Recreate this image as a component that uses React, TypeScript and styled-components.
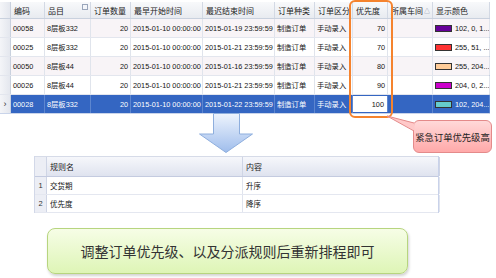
import styled, { createGlobalStyle } from 'styled-components';

const GlobalStyle = createGlobalStyle`
  body {
    margin: 0;
    background: #fff;
    font-family: "Liberation Sans", "Noto Sans CJK SC", sans-serif;
  }
`;

type RowKind = 'odd' | 'even' | 'sel';

type Order = {
  code: string;
  item: string;
  qty: number;
  start: string;
  end: string;
  priority: number;
  color: string;
  colorText: string;
};

const orders: Order[] = [
  { code: '00058', item: '8层板332', qty: 20, start: '2015-01-10 00:00:00', end: '2015-01-19 23:59:59', priority: 70, color: '#660099', colorText: '102, 0, 1...' },
  { code: '00025', item: '8层板332', qty: 20, start: '2015-01-10 00:00:00', end: '2015-01-21 23:59:59', priority: 70, color: '#ff3333', colorText: '255, 51, ...' },
  { code: '00050', item: '8层板44', qty: 20, start: '2015-01-10 00:00:00', end: '2015-01-16 23:59:59', priority: 80, color: '#ffcc99', colorText: '255, 204...' },
  { code: '00026', item: '8层板44', qty: 20, start: '2015-01-10 00:00:00', end: '2015-01-21 23:59:59', priority: 90, color: '#cc00cc', colorText: '204, 0, 2...' },
  { code: '00028', item: '8层板332', qty: 20, start: '2015-01-10 00:00:00', end: '2015-01-22 23:59:59', priority: 100, color: '#66cccc', colorText: '102, 204...' },
];

const headers = ['编码', '品目', '订单数量', '最早开始时间', '最迟结束时间', '订单种类', '订单区分', '优先度', '所属车间', '显示颜色'];

const rules = [
  { name: '交货期', value: '升序' },
  { name: '优先度', value: '降序' },
];

const App = () => {
  return (
    <>
      <GlobalStyle />
      <StPage>
        <StOrderGrid>
          <StHeadRow>
            <StRowHead />
            {headers.map((h) => (
              <StHeadCell key={h}>
                {h}
                {h === '品目' && <StFilterIcon />}
                {h === '所属车间' && <StSortMark>△</StSortMark>}
              </StHeadCell>
            ))}
          </StHeadRow>
          {orders.map((o, i) => {
            const kind: RowKind = i === orders.length - 1 ? 'sel' : i % 2 === 0 ? 'odd' : 'even';
            return (
              <StRow key={o.code} $kind={kind}>
                <StRowHead>{kind === 'sel' ? '›' : ''}</StRowHead>
                <StCell $kind={kind}>{o.code}</StCell>
                <StCell $kind={kind}>{o.item}</StCell>
                <StCell $kind={kind} $right>{o.qty}</StCell>
                <StCell $kind={kind}>{o.start}</StCell>
                <StCell $kind={kind}>{o.end}</StCell>
                <StCell $kind={kind}>制造订单</StCell>
                <StCell $kind={kind}>手动录入</StCell>
                <StCell $kind={kind} $right $edit={kind === 'sel'}>{o.priority}</StCell>
                <StCell $kind={kind} />
                <StCell $kind={kind}>
                  <StSwatch $color={o.color} />
                  {o.colorText}
                </StCell>
              </StRow>
            );
          })}
        </StOrderGrid>

        <StHighlight />

        <StMidBand>
          <StArrow viewBox="0 0 54 42" width="54" height="42">
            <defs>
              <linearGradient id="arrowFill" x1="0" y1="0" x2="0" y2="1">
                <stop offset="0" stopColor="#eef4fd" />
                <stop offset="1" stopColor="#9fbdec" />
              </linearGradient>
            </defs>
            <path
              d="M14.5 0.5 H40.5 V21 H53.5 L27 39.5 L0.5 21 H14.5 Z"
              fill="url(#arrowFill)"
              stroke="#8eaedd"
              strokeWidth="1"
            />
          </StArrow>
          <StCallout>
            <StPointer viewBox="0 0 30 20" width="30" height="20">
              <polygon points="1,1 28.5,8 28.5,16" fill="#ffc9c9" />
              <polyline points="28,8 1,1 28,16" fill="none" stroke="#e48a8a" strokeWidth="1" />
            </StPointer>
            紧急订单优先级高
          </StCallout>
        </StMidBand>

        <StRuleGrid>
          <StRuleHeadRow>
            <StRuleRowHead />
            <StRuleHeadCell>规则名</StRuleHeadCell>
            <StRuleHeadCell>内容</StRuleHeadCell>
          </StRuleHeadRow>
          {rules.map((r, i) => (
            <StRuleRow key={r.name}>
              <StRuleRowHead>{i + 1}</StRuleRowHead>
              <StRuleCell>{r.name}</StRuleCell>
              <StRuleCell>{r.value}</StRuleCell>
            </StRuleRow>
          ))}
        </StRuleGrid>

        <StNote>调整订单优先级、以及分派规则后重新排程即可</StNote>
      </StPage>
    </>
  );
};

const orderCols = '11px 34px 46px 40px 72px 72px 40px 38px 35px 45px 57px';
const ruleCols = '12px 196px 197px';

const StPage = styled.div`
  position: relative;
  width: 496px;
  height: 278px;
  overflow: hidden;
  padding-top: 2px;
  box-sizing: border-box;
`;

const StOrderGrid = styled.div`
  width: 490px;
  box-sizing: border-box;
  border-right: 1px solid #c5cfe1;
  font-size: 7.3px;
  color: #141414;
`;

const StHeadRow = styled.div`
  display: grid;
  grid-template-columns: ${orderCols};
  height: 17px;
  background: linear-gradient(#f8f9fb, #e8ebf0);
  border-bottom: 1px solid #c9d1de;
  box-sizing: border-box;
`;

const StHeadCell = styled.div`
  position: relative;
  display: flex;
  align-items: center;
  padding: 0 2px 0 3px;
  border-right: 1px solid #d3d9e4;
  font-size: 8px;
  color: #222;
  white-space: nowrap;
  overflow: hidden;
`;

const StFilterIcon = styled.span`
  position: absolute;
  right: 2px;
  top: 2px;
  width: 4px;
  height: 4px;
  border: 1px solid #9aa6bb;
  background: #f4f6fa;
`;

const StSortMark = styled.span`
  margin-left: auto;
  font-size: 6px;
  color: #7d8aa3;
`;

const StRow = styled.div<{ $kind: RowKind }>`
  display: grid;
  grid-template-columns: ${orderCols};
  height: 19px;
  box-sizing: border-box;
  border-bottom: 1px solid ${(p) => (p.$kind === 'sel' ? '#c9d4ea' : '#e3e6ee')};
  background: ${(p) => (p.$kind === 'sel' ? '#3466c2' : p.$kind === 'odd' ? '#f8f4f7' : '#ffffff')};
`;

const StRowHead = styled.div`
  display: flex;
  align-items: center;
  justify-content: center;
  background: linear-gradient(90deg, #f4f5f8, #e4e7ee);
  border-right: 1px solid #c9d1de;
  font-size: 9px;
  color: #333;
`;

const StCell = styled.div<{ $kind: RowKind; $right?: boolean; $edit?: boolean }>`
  display: flex;
  align-items: center;
  justify-content: ${(p) => (p.$right ? 'flex-end' : 'flex-start')};
  padding: 0 2px;
  border-right: 1px solid ${(p) => (p.$kind === 'sel' ? '#5d86cf' : '#e0e4ec')};
  white-space: nowrap;
  overflow: hidden;
  color: ${(p) => (p.$kind === 'sel' && !p.$edit ? '#ffffff' : '#141414')};
  background: ${(p) => (p.$edit ? '#ffffff' : 'transparent')};
  ${(p) => (p.$edit ? 'margin: 1px 0; padding-right: 3px;' : '')}
`;

const StSwatch = styled.span<{ $color: string }>`
  flex-shrink: 0;
  width: 15px;
  height: 5px;
  margin-right: 3px;
  border: 1px solid #333;
  background: ${(p) => p.$color};
`;

const StHighlight = styled.div`
  position: absolute;
  left: 349px;
  top: 0;
  width: 44px;
  height: 118px;
  box-sizing: border-box;
  border: 2px solid #f5832e;
  border-radius: 6px;
`;

const StMidBand = styled.div`
  display: flex;
  align-items: flex-start;
  height: 42px;
  padding-left: 199px;
`;

const StArrow = styled.svg`
  flex-shrink: 0;
  margin-top: -1px;
`;

const StCallout = styled.div`
  position: relative;
  margin-left: 160px;
  margin-top: 6px;
  width: 79px;
  height: 33px;
  box-sizing: border-box;
  display: flex;
  align-items: center;
  justify-content: center;
  border: 1px solid #e48a8a;
  border-radius: 6px;
  background: linear-gradient(#ffd9d9, #ffa9a9);
  font-family: "Noto Sans CJK SC", sans-serif;
  font-size: 9.3px;
  color: #222;
  white-space: nowrap;
`;

const StPointer = styled.svg`
  position: absolute;
  left: -28px;
  top: -6px;
`;

const StRuleGrid = styled.div`
  width: 405px;
  margin-left: 34px;
  box-sizing: border-box;
  border-left: 1px solid #d2d8e8;
  border-right: 1px solid #c9d2ea;
  font-size: 7.5px;
  color: #141414;
`;

const StRuleHeadRow = styled.div`
  display: grid;
  grid-template-columns: ${ruleCols};
  height: 21px;
  box-sizing: border-box;
  border-top: 1px solid #d6dbe8;
  border-bottom: 1px solid #c4cbe0;
  background: linear-gradient(#f6f7fb, #dfe3ef);
`;

const StRuleHeadCell = styled.div`
  display: flex;
  align-items: center;
  padding: 0 3px;
  border-right: 1px solid #cfd5e5;
  font-size: 8px;
  color: #222;
`;

const StRuleRow = styled.div`
  display: grid;
  grid-template-columns: ${ruleCols};
  height: 18px;
  box-sizing: border-box;
  border-bottom: 1px solid #e4e7f0;
`;

const StRuleRowHead = styled.div`
  display: flex;
  align-items: center;
  justify-content: center;
  background: #eceef5;
  border-right: 1px solid #cfd5e5;
  font-size: 7.5px;
  color: #333;
`;

const StRuleCell = styled.div`
  display: flex;
  align-items: center;
  padding: 0 3px;
  border-right: 1px solid #e0e4ee;
`;

const StNote = styled.div`
  width: 361px;
  height: 46px;
  margin: 15px 0 0 47px;
  box-sizing: border-box;
  display: flex;
  align-items: center;
  justify-content: center;
  border: 1px solid #b7d57f;
  border-radius: 8px;
  background: linear-gradient(#f6fde6, #def5b6);
  box-shadow: 1px 2px 3px rgba(0, 0, 0, 0.18);
  font-family: "Noto Sans CJK SC", serif;
  font-size: 14px;
  color: #333;
`;

export default App;
